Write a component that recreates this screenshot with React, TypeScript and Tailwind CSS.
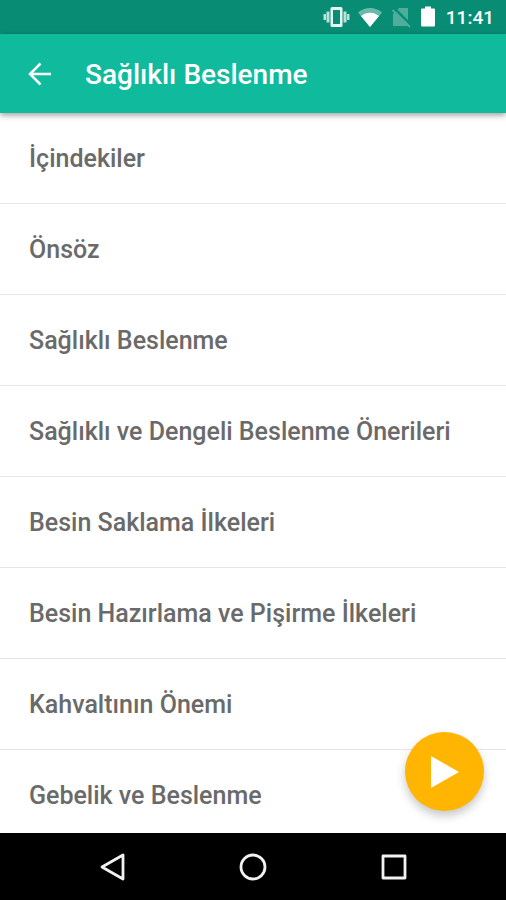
import type { ReactNode } from 'react'

const CHAPTERS = [
  'İçindekiler',
  'Önsöz',
  'Sağlıklı Beslenme',
  'Sağlıklı ve Dengeli Beslenme Önerileri',
  'Besin Saklama İlkeleri',
  'Besin Hazırlama ve Pişirme İlkeleri',
  'Kahvaltının Önemi',
  'Gebelik ve Beslenme',
]

function StatusBar() {
  return (
    <div className="flex h-[34px] shrink-0 items-center justify-end bg-[#088d74] pr-3 text-white">
      <svg className="mr-1.5 h-7 w-7" viewBox="0 0 28 28" fill="#e6f7f3" aria-hidden="true">
        <path fillRule="evenodd" d="M10 4h9a1.500 1.500 0 0 1 1.500 1.500v17A1.500 1.500 0 0 1 19 24h-9a1.500 1.500 0 0 1-1.500-1.500v-17A1.500 1.500 0 0 1 10 4zM11 7v14h7V7z" />
        <path opacity="0.8" d="M4.500 8.500h3v11h-3zM1.500 11h2.500v6H1.500zM21.500 8.500h3v11h-3zM25 11h2.500v6H25z" />
      </svg>
      <svg className="mr-1.5 h-7 w-7" viewBox="0 0 28 28" fill="currentColor" aria-hidden="true">
        <path opacity="0.4" d="M2 9.500C9 3.500 19 3.500 26 9.500L14 24z" />
        <path d="M5 13c5.500-4.500 12.500-4.500 18 0l-9 11z" />
      </svg>
      <svg className="mr-1 h-7 w-6" viewBox="0 0 24 28" aria-hidden="true">
        <path fill="#4fae9b" d="M9 5h9v18H3V11z" />
        <path stroke="#088d74" strokeWidth="2.500" d="M4.500 5.500l17 17" />
        <path stroke="#4fae9b" strokeWidth="1.800" d="M2.500 7l17.500 17" />
      </svg>
      <svg className="mr-2 h-7 w-5" viewBox="0 0 20 28" fill="currentColor" aria-hidden="true">
        <path d="M7 3.500h6v2h3a1 1 0 0 1 1 1v16a1 1 0 0 1-1 1H4a1 1 0 0 1-1-1v-16a1 1 0 0 1 1-1h3z" />
      </svg>
      <span className="pt-0.5 text-[19px] font-medium leading-6">11:41</span>
    </div>
  )
}

function NavButton({ label, children }: { label: string; children: ReactNode }) {
  return (
    <button type="button" aria-label={label} className="flex h-12 w-12 items-center justify-center">
      <svg className="h-8 w-8" viewBox="0 0 32 32" fill="none" stroke="#f2f2f2" strokeWidth="2.800" strokeLinejoin="round" aria-hidden="true">
        {children}
      </svg>
    </button>
  )
}

export default function App() {
  return (
    <div className="flex h-screen flex-col overflow-hidden bg-white font-['Roboto',sans-serif]">
      <StatusBar />

      <header className="z-10 flex h-[79px] shrink-0 items-center bg-[#10bb9d] pl-6 text-white shadow-[0_2px_6px_rgba(0,0,0,0.4)]">
        <button type="button" aria-label="Geri" className="mr-[29px] flex h-8 w-8 items-center justify-center">
          <svg className="h-8 w-8" viewBox="0 0 32 32" fill="none" stroke="currentColor" strokeWidth="2.500" aria-hidden="true">
            <path d="M27 16H6M16.500 5.500L6 16l10.500 10.500" />
          </svg>
        </button>
        <h1 className="pt-0.5 text-[28px] font-medium leading-8">Sağlıklı Beslenme</h1>
      </header>

      {/* Chapter list */}
      <main className="relative min-h-0 flex-1">
        <ul className="h-full overflow-hidden">
          {CHAPTERS.map(title => (
            <li key={title} className="border-b border-[#e6e6e6]">
              <a href="#" className="flex h-[90px] items-center pl-[29px] pt-0.5 text-[25px] font-medium leading-8 text-[#6a6a6a]">
                {title}
              </a>
            </li>
          ))}
        </ul>

        <button
          type="button"
          aria-label="Oynat"
          className="absolute bottom-[22px] right-[22px] flex h-[79px] w-[79px] items-center justify-center rounded-full bg-[#ffb502] shadow-[0_5px_10px_rgba(0,0,0,0.22)]"
        >
          <svg className="h-10 w-10" viewBox="0 0 40 40" fill="#ffffff" aria-hidden="true">
            <path d="M6 4v32l28-16z" />
          </svg>
        </button>
      </main>

      <nav className="flex h-[67px] shrink-0 items-center justify-center gap-[93px] bg-black">
        <NavButton label="Geri dön">
          <path d="M27 4v24L6 16z" />
        </NavButton>
        <NavButton label="Ana ekran">
          <circle cx="16" cy="16" r="12" />
        </NavButton>
        <NavButton label="Son uygulamalar">
          <path d="M5 5h22v22H5z" />
        </NavButton>
      </nav>
    </div>
  )
}
